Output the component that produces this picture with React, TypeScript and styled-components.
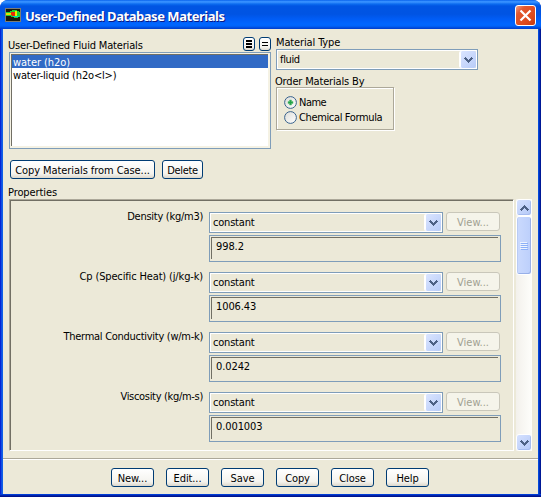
import React from "react";
import styled, { createGlobalStyle, css } from "styled-components";

const GlobalStyle = createGlobalStyle`
  * { box-sizing: border-box; }
  html, body { margin: 0; padding: 0; background: #fff; }
  body { font: 11px/13px "DejaVu Sans Condensed", "DejaVu Sans", sans-serif; color: #000; overflow: hidden; }
`;

const Window = styled.div`
  width: 541px;
  height: 497px;
  display: flex;
  flex-direction: column;
  border-radius: 8px 8px 0 0;
  overflow: hidden;
  background: linear-gradient(90deg, #0019cf 0, #0831d9 1px, #166aee 2px, #0855dd 3px, #0855dd 538px, #003dd6 539px, #001ea0 540px, #00138c 541px);
`;

const TitleBar = styled.header`
  height: 29px;
  flex: none;
  display: flex;
  align-items: center;
  padding: 1px 5px 0 5px;
  background: linear-gradient(180deg, #0058e6 0, #2e8bff 1px, #3a93ff 2px, #0b6cf0 4px, #0055e3 6px, #0054e3 14px, #005cf5 19px, #0066ff 24px, #0064fa 26px, #0048d8 28px, #003dcc 29px);
`;

const Title = styled.h1`
  flex: 1;
  margin: 2px 0 0 4px;
  font: bold 13px/16px "Noto Sans", sans-serif;
  letter-spacing: -0.46px;
  color: #fff;
  text-shadow: 1px 1px 0 #0a1883;
  white-space: nowrap;
`;

const CloseButton = styled.button`
  width: 21px;
  height: 21px;
  padding: 0;
  border: 1px solid #fff;
  border-radius: 3px;
  background: linear-gradient(135deg, #f0a088 0, #e2582f 25%, #dd4a1c 70%, #c63a10 100%);
  display: grid;
  place-items: center;
`;

const Client = styled.main`
  flex: none;
  width: 535px;
  height: 465px;
  margin-left: 3px;
  background: #ece9d8;
  display: flex;
  flex-direction: column;
`;

const WindowBase = styled.div`
  height: 3px;
  background: linear-gradient(180deg, #0048e0 0, #0030c8 1px, #00138c 2px, #00138c 3px);
`;

const TopArea = styled.section`
  display: flex;
  gap: 5px;
  height: 131px;
  padding: 7px 0 0 6px;
`;

const ListColumn = styled.div`
  width: 262px;
`;

const ListHead = styled.div`
  display: flex;
  align-items: center;
  height: 16px;
  gap: 4px;
`;

const Label = styled.span<{ $track?: number }>`
  display: block;
  white-space: nowrap;
  letter-spacing: ${(p) => p.$track ?? 0}px;
`;

const ListLabel = styled(Label)`
  flex: 1;
  margin: 3px 0 0 -1px;
`;

const xpButton = css`
  border: 1px solid #003c74;
  border-radius: 3px;
  background: linear-gradient(180deg, #fff 0, #f4f3ee 75%, #dcd7cb 100%);
  color: #000;
  font: inherit;
  padding: 0;
  white-space: nowrap;
`;

const MiniButton = styled.button`
  ${xpButton}
  width: 12px;
  height: 14px;
  display: grid;
  place-items: center;
`;

const ListBox = styled.div`
  height: 97px;
  border: 1px solid #7f9db9;
  background: #f5f2e4;
  padding: 1px 2px 2px 1px;
`;

const ListInner = styled.div`
  height: 100%;
  background: #fff;
  border-left: 1px solid #716f64;
  border-top: 1px solid #716f64;
`;

const ListItem = styled.div<{ $selected?: boolean; $track: number }>`
  height: 13px;
  line-height: 15px;
  padding-left: 1px;
  letter-spacing: ${(p) => p.$track}px;
  background: ${(p) => (p.$selected ? "#316ac5" : "transparent")};
  color: ${(p) => (p.$selected ? "#fff" : "#000")};
`;

const OptionsColumn = styled.div`
  width: 202px;
`;

const ComboBox = styled.div<{ $width: number }>`
  width: ${(p) => p.$width}px;
  height: 21px;
  border: 1px solid #7f9db9;
  box-shadow: inset 0 0 0 1px #fff;
  display: flex;
  align-items: center;
  justify-content: space-between;
  padding: 1px 1px 1px 3px;
`;

const ComboArrow = styled.span`
  width: 17px;
  height: 17px;
  border-left: 1px solid #fff;
  border-radius: 2px;
  background: linear-gradient(135deg, #dbe5ff, #b8ccf8);
  box-shadow: inset 1px 0 0 #fff;
  display: grid;
  place-items: center;
`;

const OrderLabel = styled(Label)`
  margin: 5px 0 -1px -1px;
`;

const RadioGroup = styled.div`
  width: 118px;
  height: 43px;
  border: 1px solid #aca899;
  box-shadow: inset 1px 1px 0 #fff, 1px 1px 0 #fff;
  padding: 7px 0 0 7px;
`;

const RadioRow = styled.label`
  display: flex;
  height: 15px;
  align-items: center;
  gap: 2px;
`;

const ActionRow = styled.div`
  display: flex;
  gap: 7px;
  padding-left: 7px;
`;

const Button = styled.button<{ $width: number; $track?: number }>`
  ${xpButton}
  width: ${(p) => p.$width}px;
  height: 19px;
  padding-top: 1px;
  letter-spacing: ${(p) => p.$track ?? 0}px;
  &:disabled {
    border-color: #c9c7ba;
    background: #f5f4ea;
    color: #a1a192;
  }
`;

const PropertiesLabel = styled(Label)`
  margin: 7px 0 0 5px;
`;

const PropertiesArea = styled.section`
  display: flex;
  gap: 2px;
  height: 252px;
  padding-left: 6px;
`;

const PropertiesPanel = styled.div`
  width: 505px;
  border: 1px solid;
  border-color: #aca899 #fff #fff #aca899;
  box-shadow: inset 1px 1px 0 #716f64;
  padding: 12px 0 0 1px;
`;

const PropertyRow = styled.div`
  display: grid;
  grid-template-columns: 192px 292px;
  column-gap: 6px;
  height: 60px;
`;

const PropertyLabel = styled(Label)`
  text-align: right;
  margin-top: -2px;
`;

const PropertyControls = styled.div`
  display: flex;
  flex-direction: column;
  gap: 2px;
`;

const MethodRow = styled.div`
  display: flex;
  gap: 3px;
`;

const ValueField = styled.div`
  height: 27px;
  border: 1px solid #7f9db9;
  padding: 1px 2px 2px 1px;
`;

const ValueText = styled.div`
  height: 100%;
  border-left: 1px solid #716f64;
  border-top: 1px solid #716f64;
  padding: 2px 0 0 4px;
  letter-spacing: -0.1px;
`;

const ScrollTrack = styled.div`
  width: 16px;
  display: flex;
  flex-direction: column;
  background: linear-gradient(90deg, #f3f1ec, #fefefb);
`;

const ScrollButton = styled.span`
  width: 16px;
  height: 17px;
  border: 1px solid #fff;
  border-radius: 3px;
  background: linear-gradient(135deg, #d5e1ff, #b5c9f7);
  box-shadow: inset -1px -1px 0 #a7bdf0;
  display: grid;
  place-items: center;
`;

const ScrollThumb = styled.span`
  width: 16px;
  height: 59px;
  border: 1px solid #fff;
  border-radius: 3px;
  background: linear-gradient(90deg, #cbdafe, #bccffb);
  box-shadow: inset -1px -1px 0 #98b0e8, inset 1px 0 0 #b9cbf5;
  display: grid;
  place-items: center;
`;

const TrackSpace = styled.span`
  flex: 1;
`;

const Footer = styled.footer`
  margin-top: 7px;
  border-top: 1px solid #aca899;
  box-shadow: inset 0 1px 0 #fff;
  padding: 9px 1px 0 0;
  display: flex;
  justify-content: center;
  gap: 12px;
`;

const Chevron = ({ up = false }: { up?: boolean }) => (
  <svg width="9" height="6" viewBox="0 0 9 6" shapeRendering="crispEdges">
    <path
      transform={up ? "translate(0 6) scale(1 -1)" : undefined}
      d="M1 0h1v1h1v1h1v1h1v-1h1v-1h1v-1h1v1h1v1h-1v1h-1v1h-1v1h-1v1h-1v-1h-1v-1h-1v-1h-1v-1h-1v-1h1z"
      fill="#4d6185"
    />
  </svg>
);

const Radio = ({ checked = false }: { checked?: boolean }) => (
  <svg width="13" height="13" viewBox="0 0 13 13">
    <defs>
      <linearGradient id="radioFace" x1="0" y1="0" x2="1" y2="1">
        <stop offset="0" stopColor="#dcdcd7" />
        <stop offset="1" stopColor="#fff" />
      </linearGradient>
    </defs>
    <circle cx="6.5" cy="6.5" r="5.9" fill="url(#radioFace)" stroke="#38628c" />
    {checked && <path d="M5.5 4h2v1.500h1.500v2h-1.500v1.500h-2v-1.500h-1.500v-2h1.500z" fill="#22a14a" stroke="#5cc070" strokeWidth=".5" />}
  </svg>
);

const AppIcon = () => (
  <svg width="16" height="16" viewBox="0 0 16 16" shapeRendering="crispEdges">
    <rect y="1" width="16" height="14" fill="#7c7c74" />
    <rect x="1" y="2" width="14" height="12" fill="#18180c" />
    <path d="M1 5h4v-1h2v-1h5v1h2v1h1v5h-2v1h-4v-1h-3v-1h-5z" fill="#20d030" />
    <path d="M1 6h5v2h-5z" fill="#e8e000" />
    <path d="M6 5h4v4h-3v-1h-1z" fill="#e82808" />
    <path d="M10 4h2v5h-2z" fill="#e8f000" />
    <path d="M8 9h6v1h-6z" fill="#00d8c0" />
  </svg>
);

const properties = [
  { label: "Density (kg/m3)", value: "998.2", track: -0.27 },
  { label: "Cp (Specific Heat) (j/kg-k)", value: "1006.43", track: -0.15 },
  { label: "Thermal Conductivity (w/m-k)", value: "0.0242", track: -0.28 },
  { label: "Viscosity (kg/m-s)", value: "0.001003", track: -0.31 },
];

const actions = ["New...", "Edit...", "Save", "Copy", "Close", "Help"];

export default function App() {
  return (
    <>
      <GlobalStyle />
      <Window>
        <TitleBar>
          <AppIcon />
          <Title>User-Defined Database Materials</Title>
          <CloseButton aria-label="Close window">
            <svg width="13" height="13" viewBox="0 0 13 13">
              <path d="M1.5 1.5l10 10M11.5 1.5l-10 10" stroke="#fff" strokeWidth="2.2" />
            </svg>
          </CloseButton>
        </TitleBar>
        <Client>
          <TopArea>
            <ListColumn>
              <ListHead>
                <ListLabel $track={-0.17}>User-Defined Fluid Materials</ListLabel>
                <MiniButton aria-label="Select all">
                  <svg width="6" height="8" viewBox="0 0 6 8" shapeRendering="crispEdges">
                    <path d="M0 0h6v2h-6zM0 3h6v2h-6zM0 6h6v2h-6z" />
                  </svg>
                </MiniButton>
                <MiniButton aria-label="Deselect all">
                  <svg width="6" height="4" viewBox="0 0 6 4" shapeRendering="crispEdges">
                    <path d="M0 0h6v1h-6zM0 3h6v1h-6z" />
                  </svg>
                </MiniButton>
              </ListHead>
              <ListBox>
                <ListInner>
                  <ListItem $selected $track={-0.05}>water (h2o)</ListItem>
                  <ListItem $track={-0.17}>{"water-liquid (h2o<l>)"}</ListItem>
                </ListInner>
              </ListBox>
            </ListColumn>
            <OptionsColumn>
              <Label $track={-0.13}>Material Type</Label>
              <ComboBox $width={202}>
                <Label $track={-0.35}>fluid</Label>
                <ComboArrow><Chevron /></ComboArrow>
              </ComboBox>
              <OrderLabel $track={-0.17}>Order Materials By</OrderLabel>
              <RadioGroup>
                <RadioRow><Radio checked /><Label $track={-0.5}>Name</Label></RadioRow>
                <RadioRow><Radio /><Label $track={-0.36}>Chemical Formula</Label></RadioRow>
              </RadioGroup>
            </OptionsColumn>
          </TopArea>
          <ActionRow>
            <Button $width={145} $track={-0.07}>Copy Materials from Case...</Button>
            <Button $width={41} $track={-0.3}>Delete</Button>
          </ActionRow>
          <PropertiesLabel $track={-0.1}>Properties</PropertiesLabel>
          <PropertiesArea>
            <PropertiesPanel>
              {properties.map((p) => (
                <PropertyRow key={p.label}>
                  <PropertyLabel $track={p.track}>{p.label}</PropertyLabel>
                  <PropertyControls>
                    <MethodRow>
                      <ComboBox $width={234}>
                        <Label $track={-0.2}>constant</Label>
                        <ComboArrow><Chevron /></ComboArrow>
                      </ComboBox>
                      <Button $width={54} disabled>View...</Button>
                    </MethodRow>
                    <ValueField><ValueText>{p.value}</ValueText></ValueField>
                  </PropertyControls>
                </PropertyRow>
              ))}
            </PropertiesPanel>
            <ScrollTrack>
              <ScrollButton><Chevron up /></ScrollButton>
              <ScrollThumb>
                <svg width="8" height="8" viewBox="0 0 8 8" shapeRendering="crispEdges">
                  <path d="M0 0h7v1h-7zM0 2h7v1h-7zM0 4h7v1h-7zM0 6h7v1h-7z" fill="#eef4fe" />
                  <path d="M1 1h7v1h-7zM1 3h7v1h-7zM1 5h7v1h-7zM1 7h7v1h-7z" fill="#8cb0f8" />
                </svg>
              </ScrollThumb>
              <TrackSpace />
              <ScrollButton><Chevron /></ScrollButton>
            </ScrollTrack>
          </PropertiesArea>
          <Footer>
            {actions.map((a) => (
              <Button key={a} $width={43} $track={-0.1}>{a}</Button>
            ))}
          </Footer>
        </Client>
        <WindowBase />
      </Window>
    </>
  );
}
